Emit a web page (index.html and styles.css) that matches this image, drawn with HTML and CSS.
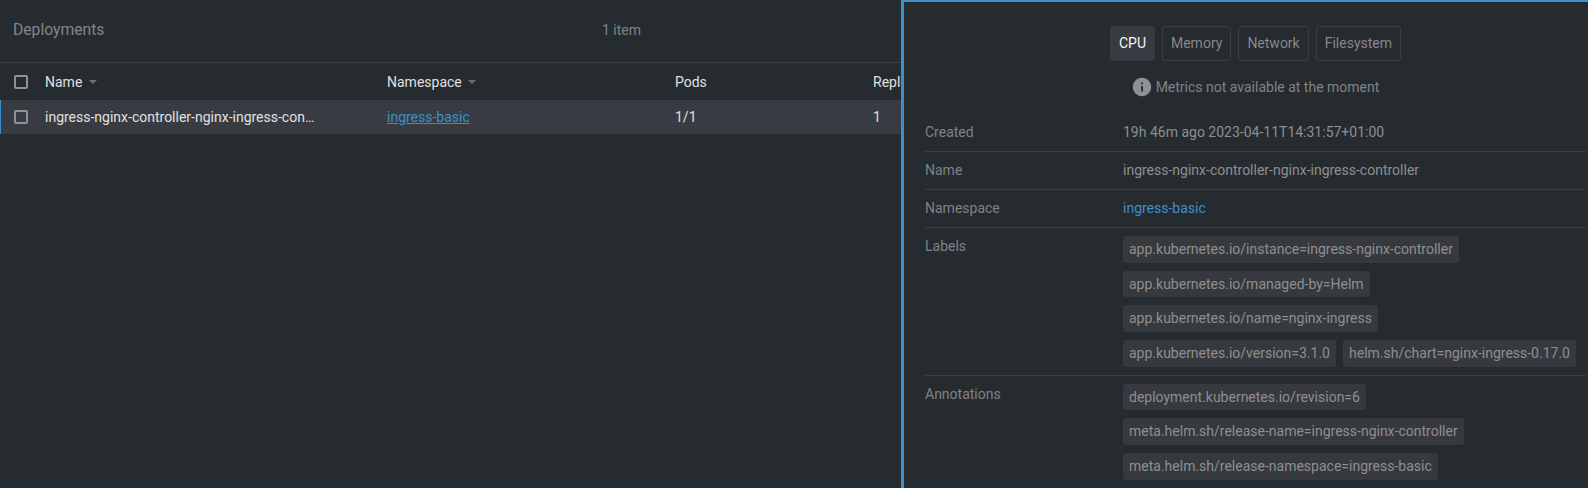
FILE: index.html
```html
<!DOCTYPE html>
<html lang="en">
<head>
<meta charset="utf-8">
<title>Deployments</title>
<link rel="stylesheet" href="styles.css">
</head>
<body>
<main class="page">
  <header class="list-header">
    <h1 class="list-title">Deployments</h1>
    <span class="list-count">1 item</span>
  </header>
  <div class="table-row table-head">
    <span class="checkbox"></span>
    <span class="cell">Name<i class="sort"></i></span>
    <span class="cell">Namespace<i class="sort"></i></span>
    <span class="cell">Pods</span>
    <span class="cell">Replicas</span>
  </div>
  <div class="table-row table-item">
    <span class="checkbox"></span>
    <span class="cell"><span class="truncate">ingress-nginx-controller-nginx-ingress-controller</span></span>
    <span class="cell"><a class="ns-link" href="#">ingress-basic</a></span>
    <span class="cell">1/1</span>
    <span class="cell">1</span>
  </div>
</main>
<aside class="drawer">
  <nav class="tabs">
    <span class="tab tab-active">CPU</span>
    <span class="tab">Memory</span>
    <span class="tab">Network</span>
    <span class="tab">Filesystem</span>
  </nav>
  <p class="notice">
    <svg class="notice-icon" viewBox="0 0 24 24" aria-hidden="true"><path d="M12 2C6.48 2 2 6.48 2 12s4.48 10 10 10 10-4.48 10-10S17.52 2 12 2zm1 15h-2v-6h2v6zm0-8h-2V7h2v2z"/></svg>
    Metrics not available at the moment
  </p>
  <dl class="details">
    <div class="detail">
      <dt>Created</dt>
      <dd>19h 46m ago 2023-04-11T14:31:57+01:00</dd>
    </div>
    <div class="detail">
      <dt>Name</dt>
      <dd>ingress-nginx-controller-nginx-ingress-controller</dd>
    </div>
    <div class="detail">
      <dt>Namespace</dt>
      <dd><a class="detail-link" href="#">ingress-basic</a></dd>
    </div>
    <div class="detail detail-badges">
      <dt>Labels</dt>
      <dd>
        <span class="badge">app.kubernetes.io/instance=ingress-nginx-controller</span>
        <span class="badge">app.kubernetes.io/managed-by=Helm</span>
        <span class="badge">app.kubernetes.io/name=nginx-ingress</span>
        <span class="badge">app.kubernetes.io/version=3.1.0</span>
        <span class="badge">helm.sh/chart=nginx-ingress-0.17.0</span>
      </dd>
    </div>
    <div class="detail detail-badges">
      <dt>Annotations</dt>
      <dd>
        <span class="badge">deployment.kubernetes.io/revision=6</span>
        <span class="badge">meta.helm.sh/release-name=ingress-nginx-controller</span>
        <span class="badge">meta.helm.sh/release-namespace=ingress-basic</span>
      </dd>
    </div>
  </dl>
</aside>
</body>
</html>
```
FILE: styles.css
```css
* { box-sizing: border-box; }
html, body { height: 100%; }
body {
  margin: 0;
  overflow: hidden;
  position: relative;
  background: #262b2f;
  color: #969696;
  font: 14px/20px Roboto, "Liberation Sans", sans-serif;
}
.page { height: 100%; }
.list-header {
  height: 63px;
  display: grid;
  grid-template-columns: 1fr auto;
  align-items: center;
  position: relative;
  padding: 0 13px 2px;
  border-bottom: 1px solid #3a3e44;
}
.list-title {
  margin: 0;
  font-size: 15.7px;
  font-weight: 400;
  color: #82868b;
}
.list-count {
  position: absolute;
  left: 602px;
  top: 20px;
  color: #7f8388;
}
.table-row {
  display: grid;
  grid-template-columns: 31px 342px 288px 198px 1fr;
  align-items: center;
  padding-left: 14px;
  color: #e0e0e0;
}
.table-head { height: 37px; }
.table-item {
  height: 34px;
  background: #383c42;
  border-left: 1px solid #3d90ce;
  padding-left: 13px;
}
.checkbox {
  display: block;
  width: 14px;
  height: 14px;
  border: 2px solid #8e9297;
  border-radius: 2px;
}
.cell { display: flex; align-items: center; min-width: 0; white-space: nowrap; }
.truncate {
  display: block;
  width: 272px;
  overflow: hidden;
  text-overflow: ellipsis;
}
.sort {
  width: 0;
  height: 0;
  margin-left: 6.5px;
  border-left: 4px solid transparent;
  border-right: 4px solid transparent;
  border-top: 4px solid #6d7075;
}
.ns-link { color: #3d90ce; }
.drawer {
  position: absolute;
  top: 0;
  right: 0;
  bottom: 0;
  width: 687px;
  overflow: hidden;
  background: #262b2f;
  border-top: 2px solid #3d90ce;
  border-left: 3px solid #3d90ce;
  padding: 24px 2px 0 21px;
}
.tabs {
  display: flex;
  justify-content: center;
  gap: 7px;
}
.tab {
  display: block;
  height: 35px;
  line-height: 33px;
  padding: 0 8px;
  border: 1px solid #3a3e44;
  border-radius: 3px;
  color: #85888d;
}
.tab-active {
  background: #383c42;
  border-color: #383c42;
  color: #f4f4f4;
}
.notice {
  margin: 16px 0 0;
  height: 20px;
  display: flex;
  align-items: center;
  justify-content: center;
  gap: 3px;
  padding-right: 1px;
  color: #7f8388;
}
.notice-icon { width: 22px; height: 22px; fill: #8e9297; }
.details { margin: 17px 0 0; }
.detail {
  display: grid;
  grid-template-columns: 198px 1fr;
  padding: 8px 0 9px;
  border-bottom: 1px solid #3a3e44;
}
.detail dt { color: #7f8388; }
.detail dd { margin: 0; color: #8f8f8f; }
.detail-link { color: #3d90ce; text-decoration: none; }
.detail-badges { padding: 8px 0 0; }
.detail-badges dd {
  display: flex;
  flex-wrap: wrap;
  column-gap: 7px;
}
.badge {
  display: block;
  height: 26.67px;
  line-height: 26px;
  padding: 0 6px;
  margin-bottom: 8px;
  background: #363a3f;
  border-radius: 3px;
  color: #8f8f8f;
}
```
